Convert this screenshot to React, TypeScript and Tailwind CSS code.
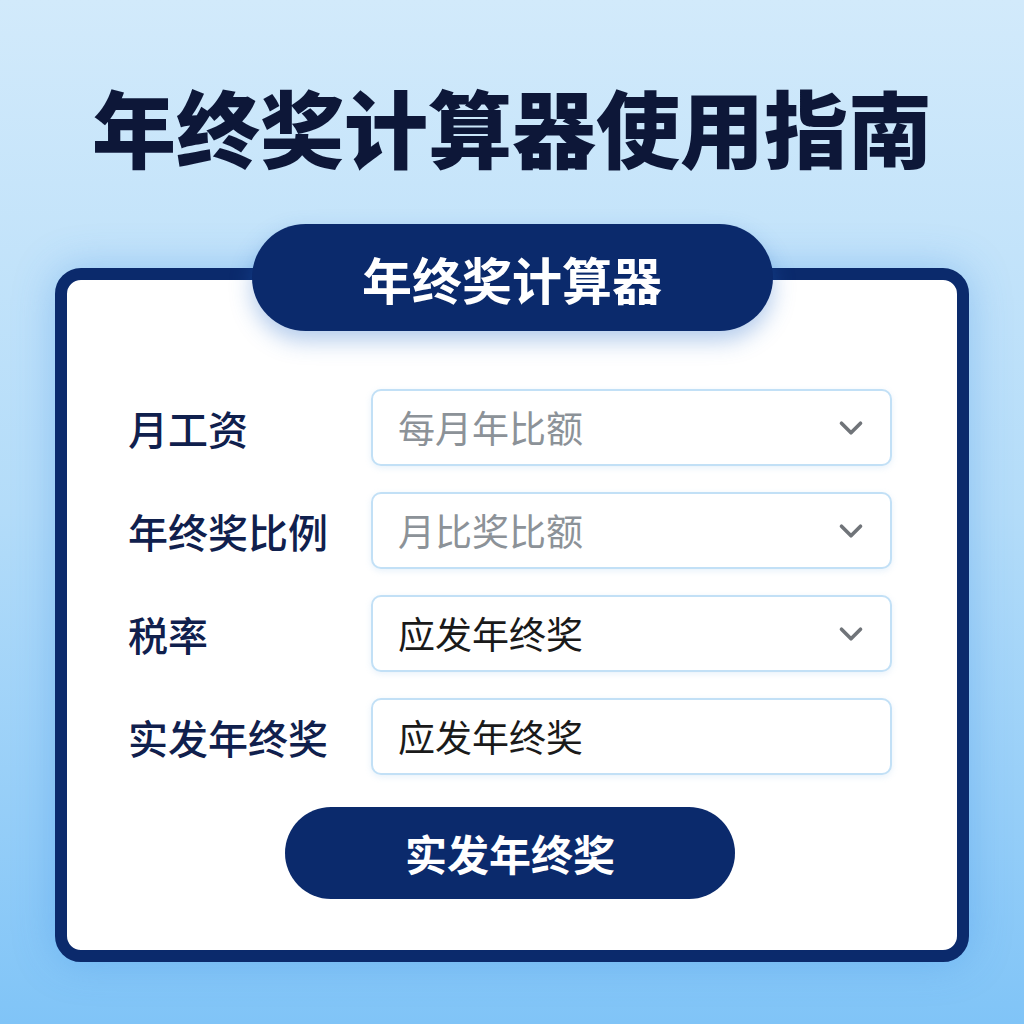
import { ChevronDown } from "lucide-react";

interface Field {
  label: string;
  value: string;
  placeholder: boolean;
  select: boolean;
}

const fields: Field[] = [
  { label: "月工资", value: "每月年比额", placeholder: true, select: true },
  { label: "年终奖比例", value: "月比奖比额", placeholder: true, select: true },
  { label: "税率", value: "应发年终奖", placeholder: false, select: true },
  { label: "实发年终奖", value: "应发年终奖", placeholder: false, select: false },
];

const font = { fontFamily: '"Noto Sans CJK SC", "Noto Sans", sans-serif' };

export default function App() {
  return (
    <div
      className="w-full h-[1024px] flex flex-col items-center bg-gradient-to-b from-[#d2eafb] via-[#b3dcf9] to-[#80c4f7]"
      style={font}
    >
      {/* heading */}
      <h1 className="pt-[84px] text-[84px] leading-none font-black text-[#0d1738]">
        年终奖计算器使用指南
      </h1>

      {/* calculator card */}
      <div className="mt-[56px] flex flex-col items-center">
        <div className="relative z-10 -mb-[63px] w-[521px] h-[107px] rounded-full bg-[#0b2a6c] flex items-center justify-center shadow-[0_10px_22px_rgba(40,110,200,0.35)]">
          <span className="text-[50px] font-bold text-white leading-none">年终奖计算器</span>
        </div>

        <div className="w-[914px] h-[694px] rounded-[26px] border-[12px] border-[#0b2a6c] bg-white shadow-[0_0_40px_rgba(60,140,230,0.35)] flex flex-col pt-[109px] pl-[61px] pr-[65px]">
          <div className="flex flex-col gap-[26px]">
            {fields.map((f, i) => (
              <div key={i} className="flex items-center">
                <span className="w-[243px] text-[40px] font-medium leading-none text-[#10204d]">
                  {f.label}
                </span>
                <div className="w-[521px] h-[77px] rounded-[10px] border-2 border-[#c2e0f6] bg-white flex items-center justify-between pl-[25px] pr-[20px] shadow-[0_2px_6px_rgba(120,180,230,0.18)]">
                  <span
                    className={
                      f.placeholder
                        ? "text-[37px] leading-none text-[#8c9298]"
                        : "text-[37px] leading-none text-[#1a1a1a]"
                    }
                  >
                    {f.value}
                  </span>
                  {f.select && (
                    <ChevronDown className="w-[38px] h-[38px] text-[#707479]" strokeWidth={2.3} />
                  )}
                </div>
              </div>
            ))}
          </div>

          <div className="mt-[32px] flex justify-center">
            <button className="w-[450px] h-[92px] rounded-full bg-[#0b2a6c] flex items-center justify-center">
              <span className="text-[42px] font-bold text-white leading-none">实发年终奖</span>
            </button>
          </div>
        </div>
      </div>
    </div>
  );
}
